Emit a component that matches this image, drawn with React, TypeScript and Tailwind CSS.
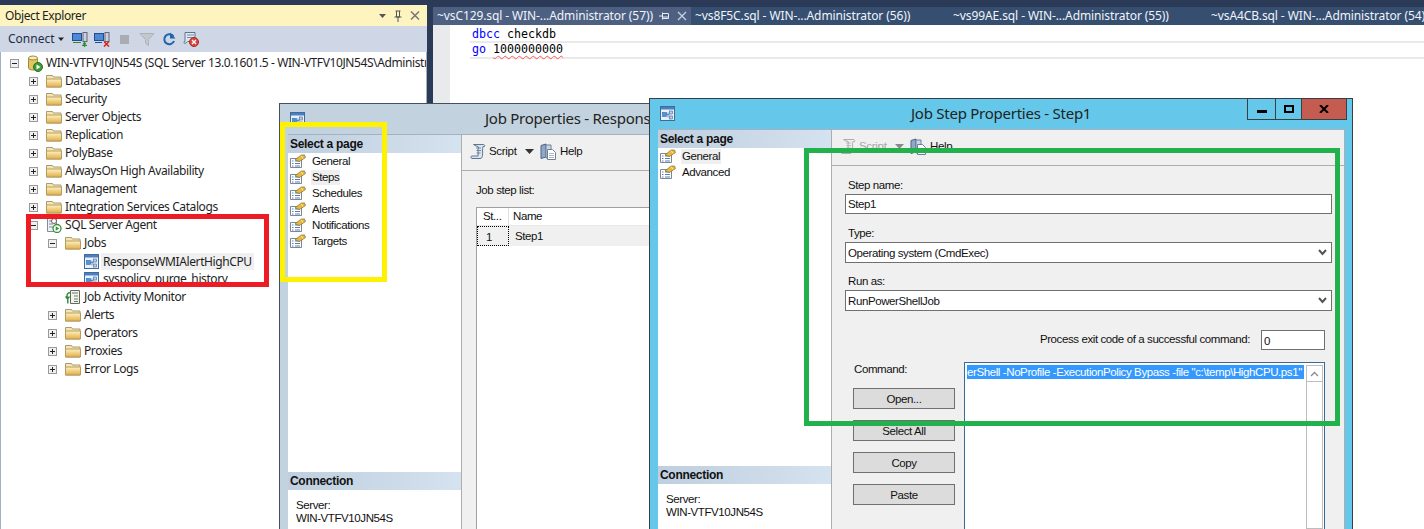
import React from "react";

const UI = "font-['Noto_Sans',sans-serif]";
const DLG = "font-['Liberation_Sans',Arial,sans-serif]";

function Folder() {
  return (
    <svg width="16" height="14" viewBox="0 0 16 14" className="shrink-0">
      <defs>
        <linearGradient id="fg" x1="0" y1="0" x2="0" y2="1">
          <stop offset="0" stopColor="#fdf3c4" />
          <stop offset="1" stopColor="#e2ad45" />
        </linearGradient>
      </defs>
      <path d="M0.5 3V1.500h6l1 1.500h7.500v10H.5z" fill="#f6e7ae" stroke="#a89a72" />
      <path d="M0.5 5h15v8H.5z" fill="url(#fg)" stroke="#b59c5e" />
    </svg>
  );
}

function Exp({ open }: { open?: boolean }) {
  return (
    <span className="relative block w-[9px] h-[9px] border border-[#9a9a9a] bg-[#f0f0f0] shrink-0 -ml-[1px]">
      <span className="absolute left-[1px] top-[3px] w-[5px] h-[1px] bg-[#222]" />
      {!open && <span className="absolute left-[3px] top-[1px] w-[1px] h-[5px] bg-[#222]" />}
    </span>
  );
}

function ServerIcon() {
  return (
    <svg width="16" height="17" viewBox="0 0 16 17" className="shrink-0">
      <path d="M1.500 3v10c0 1 1.500 2 4.500 2s4.500-1 4.500-2V3z" fill="#e6c65c" stroke="#9c8a48" />
      <ellipse cx="6" cy="3" rx="4.500" ry="2" fill="#f7eeb8" stroke="#9c8a48" />
      <circle cx="11" cy="12" r="4.500" fill="#3f9a35" stroke="#26701f" />
      <path d="M9.500 9.500v5l4-2.500z" fill="#fff" />
    </svg>
  );
}

function AgentIcon() {
  return (
    <svg width="16" height="16" viewBox="0 0 16 16" className="shrink-0">
      <path d="M1.500 1.500h9v13h-9z" fill="#eef1f5" stroke="#7f8c99" />
      <path d="M3 4h6M3 7h4M3 10h4" stroke="#7f8c99" />
      <circle cx="8" cy="4" r="2.500" fill="#fff" stroke="#666" />
      <circle cx="11" cy="11.500" r="4" fill="#fff" stroke="#3b8f3b" strokeWidth="1.300" />
      <path d="M9.700 9.300v4.400l3.500-2.200z" fill="#3b8f3b" />
    </svg>
  );
}

function JobIcon({ s = 15 }: { s?: number }) {
  return (
    <svg width={s} height={s} viewBox="0 0 15 15" className="shrink-0">
      <rect x="0.500" y="0.500" width="14" height="14" fill="#eaf1fa" stroke="#3f6a9c" />
      <rect x="1" y="1" width="13" height="2.500" fill="#4a7fc0" />
      <rect x="2.500" y="6.500" width="4" height="4" fill="#4d94e0" stroke="#2e6aa8" strokeWidth="0.600" />
      <rect x="9.500" y="5" width="3" height="3" fill="#b9cde3" stroke="#3f6a9c" strokeWidth="0.600" />
      <rect x="9.500" y="10" width="3" height="3" fill="#b9cde3" stroke="#3f6a9c" strokeWidth="0.600" />
      <path d="M6.500 8.500h3M8 6.500v5" stroke="#3f6a9c" strokeWidth="0.700" fill="none" />
    </svg>
  );
}

function MonitorIcon() {
  return (
    <svg width="16" height="16" viewBox="0 0 16 16" className="shrink-0">
      <path d="M5.500 1.500h9v13h-9z" fill="#f2f2ea" stroke="#5e6b5e" />
      <path d="M7 4h6M9 7h4M9 10h4M9 12.500h4" stroke="#6a7a6a" />
      <path d="M6 3.500C2 3.500 1.500 6 2.500 9M.5 7.500l2 2.500 2-2.500M2.800 10v4.500" stroke="#2f8a3a" strokeWidth="1.400" fill="none" />
    </svg>
  );
}

function PageIcon() {
  return (
    <svg width="16" height="14" viewBox="0 0 16 14" className="shrink-0">
      <path d="M0.500 4.500h11v9h-11z" fill="#fff" stroke="#7a8794" />
      <path d="M2 7h1.500M5 7h5M2 9.500h1.500M5 9.500h5M2 12h1.500M5 12h5" stroke="#5b7fb2" />
      <path d="M5 6l6-5h3.500l1 2.500-6 4z" fill="#e5b93c" stroke="#7b6a35" strokeWidth="0.700" />
      <path d="M11 1.500l2 3" stroke="#fff2b0" strokeWidth="0.800" />
    </svg>
  );
}

function ScrollIcon({ dim }: { dim?: boolean }) {
  const c = dim ? "#a9afb5" : "#5d7690";
  const f = dim ? "#eeeeee" : "#dbe5ef";
  return (
    <svg width="16" height="17" viewBox="0 0 16 17" className="shrink-0">
      <path d="M3.500 1.500h10c1 0 1.500 1 1 2H13c-1 3 0 6-.5 9-.2 2-1 3-2.500 3h-8c-1 0-1.500-1.500-.5-2.500H8c.5-3-.5-6 .5-9 .2-.8-3-.5-5-2.500z" fill={f} stroke={c} />
      <path d="M6 5h5M6.500 7.500h4.500M6.500 10h4" stroke={c} strokeWidth="0.800" />
    </svg>
  );
}

function HelpIcon() {
  return (
    <svg width="16" height="17" viewBox="0 0 16 17" className="shrink-0">
      <path d="M1 2.500L6 1v13l-5 1.500z" fill="#8fa8c8" stroke="#4d6483" />
      <path d="M6 2h5v13H6z" fill="#c9d6e6" stroke="#6d82a0" />
      <path d="M7.500 6.500h5l3 3v7h-8z" fill="#fff" stroke="#6d7f96" />
      <path d="M9 10.500h5M9 12.500h5M9 14.500h5" stroke="#9aa7b7" strokeWidth="0.800" />
    </svg>
  );
}

type Row = { d: number; t: string; e?: "o" | "c"; i: "folder" | "server" | "agent" | "job" | "mon"; hi?: boolean };
const rows: Row[] = [
  { d: 0, t: "WIN-VTFV10JN54S (SQL Server 13.0.1601.5 - WIN-VTFV10JN54S\\Administrator)", e: "o", i: "server" },
  { d: 1, t: "Databases", e: "c", i: "folder" },
  { d: 1, t: "Security", e: "c", i: "folder" },
  { d: 1, t: "Server Objects", e: "c", i: "folder" },
  { d: 1, t: "Replication", e: "c", i: "folder" },
  { d: 1, t: "PolyBase", e: "c", i: "folder" },
  { d: 1, t: "AlwaysOn High Availability", e: "c", i: "folder" },
  { d: 1, t: "Management", e: "c", i: "folder" },
  { d: 1, t: "Integration Services Catalogs", e: "c", i: "folder" },
  { d: 1, t: "SQL Server Agent", e: "o", i: "agent" },
  { d: 2, t: "Jobs", e: "o", i: "folder" },
  { d: 3, t: "ResponseWMIAlertHighCPU", i: "job", hi: true },
  { d: 3, t: "syspolicy_purge_history", i: "job" },
  { d: 2, t: "Job Activity Monitor", i: "mon" },
  { d: 2, t: "Alerts", e: "c", i: "folder" },
  { d: 2, t: "Operators", e: "c", i: "folder" },
  { d: 2, t: "Proxies", e: "c", i: "folder" },
  { d: 2, t: "Error Logs", e: "c", i: "folder" },
];

function TreeRow({ r }: { r: Row }) {
  const pad = [10, 29, 48, 67][r.d];
  return (
    <div className="h-[18px] flex items-center whitespace-nowrap text-[12px] tracking-[-0.4px] text-[#1e1e1e]" style={{ paddingLeft: pad }}>
      <span className="w-[16px] shrink-0 flex">{r.e && <Exp open={r.e === "o"} />}</span>
      <span className="w-[19px] shrink-0 flex">
        {r.i === "folder" && <Folder />}
        {r.i === "server" && <ServerIcon />}
        {r.i === "agent" && <AgentIcon />}
        {r.i === "job" && <JobIcon />}
        {r.i === "mon" && <MonitorIcon />}
      </span>
      <span className={r.hi ? "bg-[#f0f0f0] px-[2px] -ml-[2px] h-[17px] leading-[17px]" : ""}>{r.t}</span>
    </div>
  );
}

function ObjectExplorer() {
  return (
    <div className={`w-[427px] shrink-0 mt-[5px] flex flex-col ${UI}`}>
      <div className="h-[21px] bg-[#fdf4bf] flex items-center pl-[5px] pr-[2px] text-[12px] text-[#1e1e1e]">
        <span className="flex-1 tracking-[-0.4px]">Object Explorer</span>
        <svg width="50" height="14" viewBox="0 0 50 14">
          <path d="M4 5h7l-3.500 4z" fill="#555" />
          <path d="M20.500 2h5M21.500 2v6h3V2M19.500 8h7M23 8v5" stroke="#555" fill="none" />
          <path d="M36 2.500l8 8M44 2.500l-8 8" stroke="#777" strokeWidth="1.500" />
        </svg>
      </div>
      <div className="h-[26px] bg-[#cfd6e5] flex items-center pl-[8px] text-[12px] text-[#1e2f45]">
        <span>Connect</span>
        <svg width="8" height="6" viewBox="0 0 8 6" className="ml-[2px]"><path d="M1 1.500h6L4 5z" fill="#222" /></svg>
        <span className="ml-[7px] flex gap-[6px] items-center">
          <svg width="16" height="16" viewBox="0 0 16 16"><rect x="0.500" y="2.500" width="9" height="7" fill="#4d89d6" stroke="#1f4f8f" /><rect x="11" y="1.500" width="4" height="9" fill="#c8d2de" stroke="#667" /><path d="M1 11.500h8M10 14.500h5M12.500 16v-4M11 13.500l1.500-2 1.500 2" stroke="#2d8a2d" strokeWidth="1.200" fill="none" /></svg>
          <svg width="16" height="16" viewBox="0 0 16 16"><rect x="0.500" y="2.500" width="9" height="7" fill="#4d89d6" stroke="#1f4f8f" /><rect x="11" y="1.500" width="4" height="9" fill="#c8d2de" stroke="#667" /><path d="M1 11.500h7" stroke="#1f4f8f" /><path d="M10 10.500l5 5M15 10.500l-5 5" stroke="#d8261c" strokeWidth="1.600" /></svg>
        </span>
        <span className="ml-[10px] w-[9px] h-[9px] bg-[#a9adb3]" />
        <svg width="16" height="15" viewBox="0 0 16 15" className="ml-[10px]"><path d="M1 1.500h14L9.500 7.500v6l-3-2v-4z" fill="#c3c8cf" stroke="#aeb3ba" /></svg>
        <svg width="14" height="14" viewBox="0 0 14 14" className="ml-[7px]"><path d="M11.500 4.500A5 5 0 1 0 12 9" fill="none" stroke="#1d63b0" strokeWidth="2" /><path d="M8 .5v6h5.500z" fill="#1d63b0" /></svg>
        <span className="ml-[7px] flex"><svg width="16" height="16" viewBox="0 0 16 16"><path d="M2 1.500h10v9H5c-1 0-1.500 1.500-3 2 -1.500-.5-1.500-2 0-2z" fill="#dfe6ee" stroke="#5d7690" /><path d="M4 4h7M4 6.500h6" stroke="#5d7690" strokeWidth="0.800" /><circle cx="11" cy="11" r="4.500" fill="#d8463c" stroke="#a62a22" /><path d="M9 9l4 4M13 9l-4 4" stroke="#fff" strokeWidth="1.300" /></svg></span>
      </div>
      <div className="flex-1 bg-white border-l border-l-[#9fb0c6] border-r border-r-[#9fb0c6] pt-[2px] overflow-hidden">
        {rows.map((r) => <TreeRow key={r.t} r={r} />)}
      </div>
    </div>
  );
}

const tabs = ["~vs8F5C.sql - WIN-...Administrator (56))", "~vs99AE.sql - WIN-...Administrator (55))", "~vsA4CB.sql - WIN-...Administrator (54))"];

function Editor() {
  return (
    <div className={`flex-1 flex flex-col ml-[6px] min-w-0 ${UI}`}>
      <div className="h-[25px] pt-[7px] flex text-[12px] tracking-[-0.1px] text-[#f0f4fa] whitespace-nowrap overflow-hidden">
        <div className="w-[258px] shrink-0 bg-[#4d6082] flex items-center pl-[4px]">
          <span className="w-[219px] shrink-0">~vsC129.sql - WIN-...Administrator (57))</span>
          <svg width="12" height="10" viewBox="0 0 12 10" className="ml-[2px]"><path d="M1 5h3M4.500 1.500v7M4.500 2.500h6v5h-6M4.500 6h6" stroke="#e6ebf3" fill="none" /></svg>
          <svg width="10" height="10" viewBox="0 0 10 10" className="ml-[7px]"><path d="M1 1l8 8M9 1l-8 8" stroke="#c8d0dc" strokeWidth="1.300" /></svg>
        </div>
        <div className="flex-1 flex bg-[#364e6f] items-center pl-[4px]">
          {tabs.map((t) => <span key={t} className="w-[258px] shrink-0">{t}</span>)}
        </div>
      </div>
      <div className="flex-1 bg-white flex">
        <div className="w-[17px] bg-[#e9eaeb] shrink-0" />
        <div className="flex-1 pt-[2px] pl-[20px] font-['DejaVu_Sans_Mono',monospace] text-[11.65px] leading-[16px]">
          <div className="pl-[2px] h-[14px] leading-[14px]"><span className="text-[#0000ff]">dbcc</span> <span className="text-black">checkdb</span></div>
          <div className="border-y-2 border-[#eaeaea] h-[18px] mt-0 pl-[2px] leading-[13px]">
            <span className="text-[#0000ff]">go</span> <span className="text-black underline decoration-wavy decoration-[#ff5a5a] decoration-1 underline-offset-2">1000000000</span>
          </div>
        </div>
      </div>
    </div>
  );
}

function SectionHead({ children }: { children: React.ReactNode }) {
  return (
    <div className="h-[18px] pl-[2px] flex items-center font-bold text-[12px] text-[#111] tracking-[-0.3px] bg-gradient-to-r from-[#bfcfdf] to-[#d5e2ef]">
      {children}
    </div>
  );
}

function Pages({ items, hi }: { items: string[]; hi: string }) {
  return (
    <div className="pl-[2px]">
      {items.map((p) => (
        <div key={p} className="h-[16px] flex items-center text-[11.5px] tracking-[-0.4px] text-[#111]">
          <PageIcon />
          <span className={`ml-[5px] px-[1px] h-[15px] leading-[15px] ${p === hi ? "bg-[#efefef]" : ""}`}>{p}</span>
        </div>
      ))}
    </div>
  );
}

function Toolbar({ dim }: { dim?: boolean }) {
  return (
    <div className={`h-[36px] shrink-0 border-b border-[#adadad] flex items-center pb-[2px] pl-[8px] text-[11.5px] tracking-[-0.3px] ${dim ? "text-[#a6a6a6]" : "text-[#111]"}`}>
      <ScrollIcon dim={dim} />
      <span className="ml-[3px] w-[36px]">Script</span>
      <svg width="9" height="5" viewBox="0 0 9 5"><path d="M0 0h9L4.500 5z" fill={dim ? "#8a8a8a" : "#333"} /></svg>
      <span className="ml-[6px] flex"><HelpIcon /></span>
      <span className="ml-[4px] text-[#111]">Help</span>
    </div>
  );
}

function LeftPanel({ items, hi, connGap }: { items: string[]; hi: string; connGap: string }) {
  return (
    <div className="w-[174px] shrink-0 bg-white border-r border-[#adadad] flex flex-col">
      <SectionHead>Select a page</SectionHead>
      <Pages items={items} hi={hi} />
      <div className={connGap} />
      <SectionHead>Connection</SectionHead>
      <div className="pl-[8px] pt-[9px] text-[11.5px] tracking-[-0.4px] leading-[13px] text-[#111]">
        <div>Server:</div>
        <div>WIN-VTFV10JN54S</div>
      </div>
    </div>
  );
}

function JobProperties() {
  return (
    <div className={`absolute left-[279px] top-[103px] w-[372px] h-[426px] bg-[#c2d3df] border-l border-t border-[#44505c] flex flex-col ${DLG}`}>
      <div className={`h-[30px] shrink-0 flex items-center pl-[10px] ${UI}`}>
        <JobIcon />
        <span className="ml-[180px] -mt-[2px] text-[15px] tracking-[-0.25px] text-[#222] whitespace-nowrap">Job Properties - ResponseWMIAlertHighCPU</span>
      </div>
      <div className="flex-1 ml-[8px] flex min-h-0 border-t border-[#a3b2be]">
        <LeftPanel items={["General", "Steps", "Schedules", "Alerts", "Notifications", "Targets"]} hi="Steps" connGap="h-[223px]" />
        <div className="flex-1 bg-[#f0f0f0] flex flex-col min-w-0">
          <Toolbar />
          <div className="flex-1 pl-[14px] flex flex-col min-h-0 text-[11.5px] tracking-[-0.4px] text-[#111]">
            <div className="pt-[12px] pb-[10px] leading-[14px]">Job step list:</div>
            <div className="flex-1 bg-white border-l border-t border-[#a0a0a0]">
              <div className="h-[18px] pt-[1px] flex items-center border-b border-[#e8e8e8]">
                <span className="w-[32px] pl-[6px] border-r border-[#e0e0e0]">St...</span>
                <span className="pl-[4px]">Name</span>
              </div>
              <div className="h-[20px] flex items-center bg-[#f0f0f0]">
                <span className="w-[32px] h-[20px] pl-[8px] leading-[20px] border border-dotted border-black shrink-0">1</span>
                <span className="pl-[6px] pt-[2px]">Step1</span>
              </div>
            </div>
          </div>
        </div>
      </div>
    </div>
  );
}

function Chevron() {
  return (
    <svg width="9" height="7" viewBox="0 0 9 7" className="shrink-0"><path d="M1 1l3.500 4L8 1" stroke="#555" strokeWidth="2" fill="none" /></svg>
  );
}

function Field({ label, value, select, mb, box }: { label: string; value: string; select?: boolean; mb: string; box: string }) {
  return (
    <div className={mb}>
      <div className="pl-[3px] h-[14px] leading-[14px] mb-[2px]">{label}</div>
      <div className={`w-[487px] bg-white border border-[#707070] flex items-center pl-[2px] pr-[4px] justify-between ${box}`}>
        <span className="pt-[2px]">{value}</span>
        {select && <Chevron />}
      </div>
    </div>
  );
}

function Btn({ t }: { t: string }) {
  return <div className="w-[102px] h-[21px] pt-[2px] bg-[#dcdcdc] border border-[#707070] flex items-center justify-center">{t}</div>;
}

function JobStepProperties() {
  return (
    <div className={`absolute left-[649px] top-[98px] w-[704px] h-[431px] bg-[#65c8ea] border-x border-t border-[#3a3f44] flex flex-col ${DLG}`}>
      <div className={`h-[30px] shrink-0 flex items-start pl-[10px] relative ${UI}`}>
        <span className="mt-[7px]"><JobIcon /></span>
        <span className="ml-[236px] mt-[3px] text-[15px] tracking-[-0.25px] text-[#222] whitespace-nowrap">Job Step Properties - Step1</span>
        <div className="absolute right-[5px] top-0 h-[21px] flex">
          <span className="w-[28px] border-l border-b border-[#3a3f44] flex items-center justify-center"><span className="w-[10px] h-[3px] bg-black mt-[4px]" /></span>
          <span className="w-[26px] border-l border-b border-[#3a3f44] flex items-center justify-center"><span className="w-[10px] h-[8px] border-2 border-black" /></span>
          <span className="w-[46px] bg-[#c45c52] border-x border-b border-[#3a3f44] flex items-center justify-center">
            <svg width="10" height="8" viewBox="0 0 10 8"><path d="M1 0l8 8M9 0L1 8" stroke="#000" strokeWidth="2" /></svg>
          </span>
        </div>
      </div>
      <div className="flex-1 ml-[8px] mr-[7px] flex min-h-0 border-t border-[#a3b2be]">
        <LeftPanel items={["General", "Advanced"]} hi="General" connGap="h-[286px]" />
        <div className="flex-1 bg-[#f0f0f0] flex flex-col min-w-0 border-r border-[#adadad]">
          <Toolbar dim />
          <div className="flex-1 pl-[13px] pt-[12px] min-h-0 text-[11.5px] tracking-[-0.4px] text-[#111]">
            <Field label="Step name:" value="Step1" mb="mb-[12px]" box="h-[20px]" />
            <Field label="Type:" value="Operating system (CmdExec)" select mb="mb-[11px]" box="h-[21px]" />
            <Field label="Run as:" value="RunPowerShellJob" select mb="mb-[19px]" box="h-[21px]" />
            <div className="flex items-center justify-end w-[480px] h-[20px] mb-[12px]">
              <span className="mr-[11px]">Process exit code of a successful command:</span>
              <span className="w-[64px] h-[20px] bg-white border border-[#707070] pl-[2px] leading-[20px] shrink-0">0</span>
            </div>
            <div className="flex">
              <div className="w-[119px] pl-[8px] shrink-0">
                <div className="pl-[1px] h-[26px] leading-[14px]">Command:</div>
                <div className="flex flex-col gap-[11px]">
                  <Btn t="Open..." /><Btn t="Select All" /><Btn t="Copy" /><Btn t="Paste" />
                </div>
              </div>
              <div className="w-[361px] h-[170px] bg-white border border-[#3c6a96] flex pl-[2px] pr-[1px] py-[2px] overflow-hidden">
                <div className="w-[339px] shrink-0 overflow-hidden whitespace-nowrap">
                  <span className="block w-[337px] h-[14px] leading-[14px] bg-[#3399ff] text-white">erShell -NoProfile -ExecutionPolicy Bypass -file "c:\temp\HighCPU.ps1"</span>
                </div>
                <div className="w-[17px] shrink-0 border border-[#bdbdbd] bg-white">
                  <div className="h-[16px] border-b border-[#bdbdbd] flex items-center justify-center">
                    <svg width="9" height="6" viewBox="0 0 9 6"><path d="M1 5l3.500-3.500L8 5" stroke="#8a8a8a" strokeWidth="1.300" fill="none" /></svg>
                  </div>
                </div>
              </div>
            </div>
          </div>
        </div>
      </div>
    </div>
  );
}

export default function App() {
  return (
    <div className="relative w-[1424px] h-[529px] overflow-hidden bg-[#2b3a57] flex">
      <ObjectExplorer />
      <Editor />
      <JobProperties />
      <JobStepProperties />
      <div className="absolute left-[26px] top-[214px] w-[243px] h-[73px] border-[5px] border-[#ed1c24]" />
      <div className="absolute left-[280px] top-[122px] w-[107px] h-[160px] border-[5px] border-[#fff200]" />
      <div className="absolute left-[804px] top-[148px] w-[536px] h-[278px] border-[5px] border-[#22b14c]" />
    </div>
  );
}
